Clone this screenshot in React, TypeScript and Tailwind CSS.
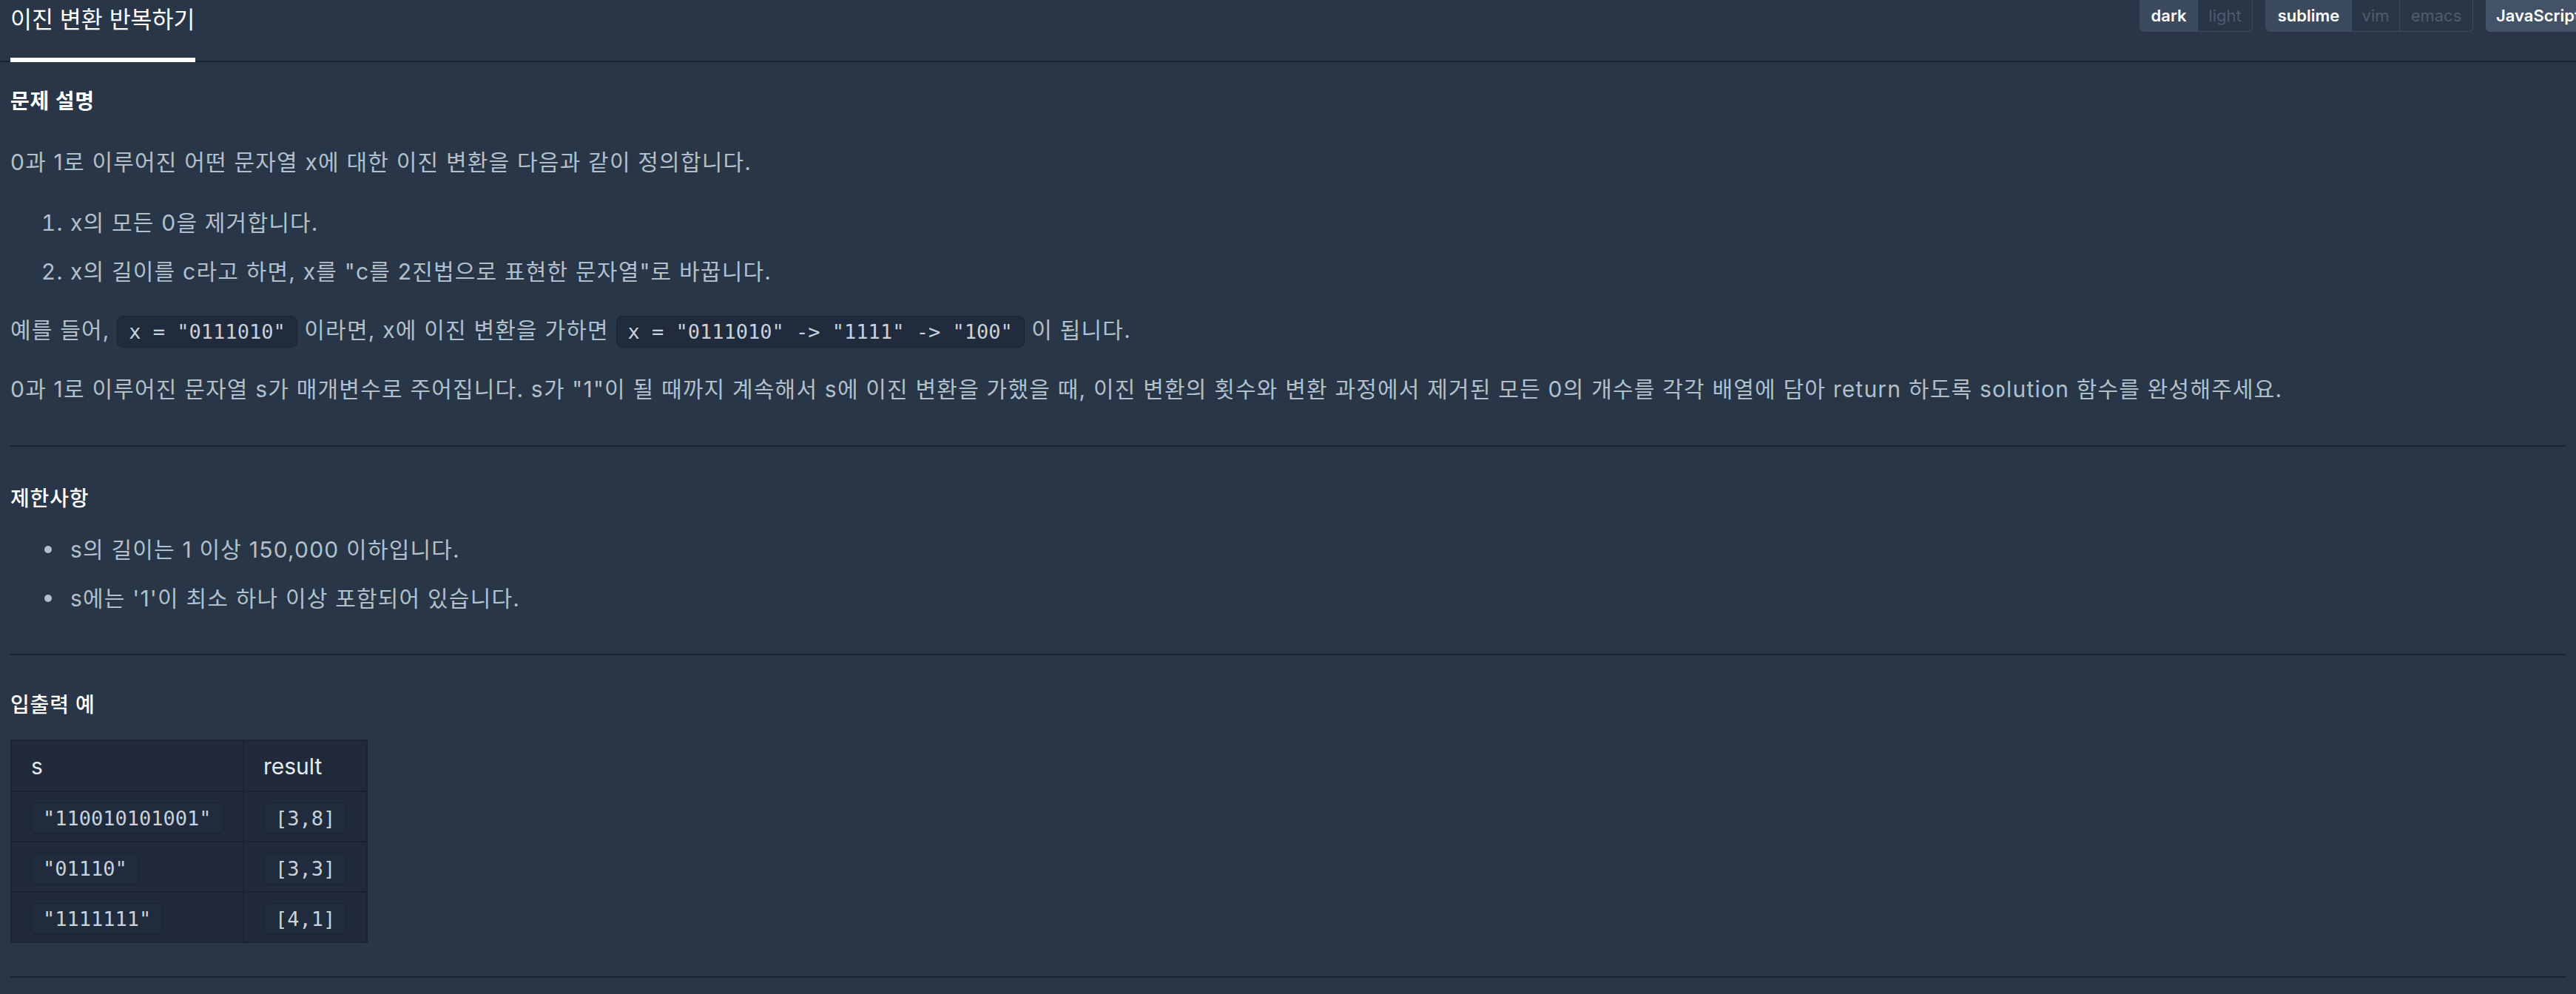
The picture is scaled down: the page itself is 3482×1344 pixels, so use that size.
import React from "react";

const rows = [
  { s: '"110010101001"', result: "[3,8]" },
  { s: '"01110"', result: "[3,3]" },
  { s: '"1111111"', result: "[4,1]" },
];

function Code({ children }: { children: React.ReactNode }) {
  return (
    <code className="inline-block whitespace-pre rounded-[8px] border border-[#1b2433] bg-[#202b3d] px-[15px] py-[5px] align-middle font-['DejaVu_Sans_Mono',monospace] text-[27px] leading-[31px] tracking-normal text-[#c9d1db]">
      {children}
    </code>
  );
}

function Toggle({ items, active }: { items: string[]; active: number }) {
  const widths = ["w-[77px]", "w-[74px]", "w-[115px]", "w-[65px]", "w-[99px]"];
  return (
    <div className="flex h-[43px] overflow-hidden rounded-b-[6px] border border-t-0 border-[#3b4a5c]">
      {items.map((item, i) => (
        <div
          key={item}
          className={
            "flex items-center justify-center " +
            (i > 0 ? "border-l border-[#3b4a5c] " : "") +
            (i === active
              ? "bg-[#3b4a5c] font-semibold text-white "
              : "text-[#4e5c6e] ") +
            (items.length === 2 ? widths[i] : widths[i + 2])
          }
        >
          {item}
        </div>
      ))}
    </div>
  );
}

function Bullet({ children }: { children: React.ReactNode }) {
  return (
    <li className="flex items-center">
      <span className="mr-[25px] h-[10px] w-[10px] shrink-0 rounded-full bg-[#b2c0cc]" />
      <span>{children}</span>
    </li>
  );
}

export default function App() {
  return (
    <div className="min-h-screen w-full overflow-hidden bg-[#283647] font-[Inter,'Noto_Sans_CJK_KR',sans-serif] text-[#b2c0cc]">
      {/* header */}
      <div className="flex h-[84px] items-stretch border-b-2 border-[#172334] px-[14px]">
        <div className="-mb-[2px] flex w-[250px] flex-col justify-between">
          <h1 className="pt-[8px] text-[31.5px] leading-[38px] whitespace-nowrap text-white">
            이진 변환 반복하기
          </h1>
          <div className="h-[6px] bg-white" />
        </div>
        <div className="-mr-[72px] ml-auto flex items-start gap-[17px] text-[22px]">
          <Toggle items={["dark", "light"]} active={0} />
          <Toggle items={["sublime", "vim", "emacs"]} active={0} />
          <div className="flex h-[43px] w-[180px] items-center rounded-b-[6px] bg-[#435266] px-[14px] font-semibold whitespace-nowrap text-white">
            JavaScript
          </div>
        </div>
      </div>

      {/* description */}
      <div className="px-[14px] text-[30px] leading-[46px] tracking-[0.04em]">
        <h5 className="mt-[35px] text-[28px] font-bold leading-[36px] tracking-[0.03em] text-white">
          문제 설명
        </h5>
        <p className="mt-[41px]">
          0과 1로 이루어진 어떤 문자열 x에 대한 이진 변환을 다음과 같이
          정의합니다.
        </p>
        <ol className="mt-[36px] list-decimal space-y-[20px] pl-[81px]">
          <li>x의 모든 0을 제거합니다.</li>
          <li>x의 길이를 c라고 하면, x를 "c를 2진법으로 표현한 문자열"로 바꿉니다.</li>
        </ol>
        <p className="mt-[33px]">
          예를 들어, <Code>x = "0111010"</Code> 이라면, x에 이진 변환을 가하면{" "}
          <Code>x = "0111010" -&gt; "1111" -&gt; "100"</Code> 이 됩니다.
        </p>
        <p className="mt-[33px] whitespace-nowrap">
          0과 1로 이루어진 문자열 s가 매개변수로 주어집니다. s가 "1"이 될
          때까지 계속해서 s에 이진 변환을 가했을 때, 이진 변환의 횟수와 변환
          과정에서 제거된 모든 0의 개수를 각각 배열에 담아 return 하도록
          solution 함수를 완성해주세요.
        </p>

        <hr className="mt-[53px] h-[2px] border-0 bg-[#172334]" />

        <h6 className="mt-[52px] text-[28px] font-medium leading-[36px] tracking-[0.03em] text-white">
          제한사항
        </h6>
        <ul className="mt-[28px] space-y-[20px] pl-[46px]">
          <Bullet>s의 길이는 1 이상 150,000 이하입니다.</Bullet>
          <Bullet>s에는 '1'이 최소 하나 이상 포함되어 있습니다.</Bullet>
        </ul>

        <hr className="mt-[52px] h-[2px] border-0 bg-[#172334]" />

        <h6 className="mt-[49px] text-[28px] font-medium leading-[36px] tracking-[0.03em] text-white">
          입출력 예
        </h6>
        <table className="mt-[29px] border-collapse border-2 border-[#1b2433] bg-[#212a3b] tracking-normal">
          <thead>
            <tr className="h-[69px]">
              <th className="w-[314px] border-2 border-[#1b2433] px-[26px] text-left font-normal text-[#e6ebf0]">
                s
              </th>
              <th className="w-[167px] border-2 border-[#1b2433] px-[26px] text-left font-normal text-[#e6ebf0]">
                result
              </th>
            </tr>
          </thead>
          <tbody>
            {rows.map((r) => (
              <tr key={r.s} className="h-[68px]">
                <td className="border-2 border-[#1b2433] px-[26px] align-middle">
                  <Code>{r.s}</Code>
                </td>
                <td className="border-2 border-[#1b2433] px-[26px] align-middle">
                  <Code>{r.result}</Code>
                </td>
              </tr>
            ))}
          </tbody>
        </table>

        <hr className="mt-[45px] h-[2px] border-0 bg-[#172334]" />
      </div>
    </div>
  );
}
